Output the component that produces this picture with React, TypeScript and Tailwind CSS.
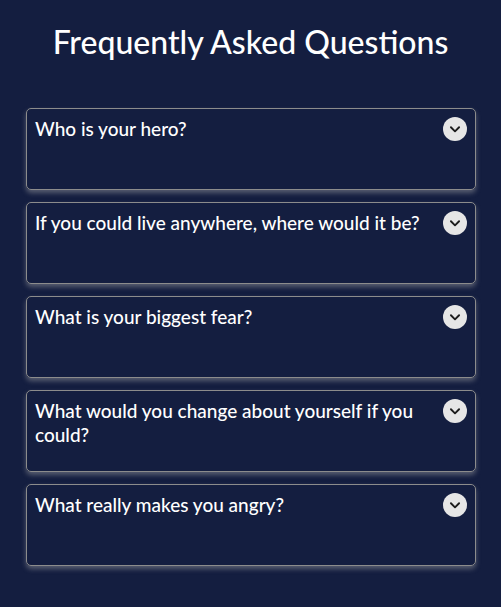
import { useState } from "react"

const QUESTIONS = [
	{ q: "Who is your hero?", a: "My parents, for everything they gave up." },
	{ q: "If you could live anywhere, where would it be?", a: "Somewhere near the sea." },
	{ q: "What is your biggest fear?", a: "Standing still." },
	{ q: "What would you change about yourself if you could?", a: "More patience." },
	{ q: "What really makes you angry?", a: "Unkindness." },
]

const Chevron = ({ open }: { open: boolean }) => (
	<span className="w-6 h-6 shrink-0 rounded-full bg-[#e6e6e6] flex items-center justify-center">
		<svg width="14" height="14" viewBox="0 0 24 24" className={open ? "rotate-180" : ""}>
			<path d="M5 9l7 7 7-7" fill="none" stroke="#1c1c1c" strokeWidth="3.2" strokeLinecap="round" strokeLinejoin="round" />
		</svg>
	</span>
)

const Item = ({ q, a }: { q: string; a: string }) => {
	const [open, setOpen] = useState(false)
	return (
		<div className="h-[82px] border border-[#8c8c8c] rounded-[5px] p-2 shadow-[0_3px_5px_rgba(170,170,170,0.45)]">
			<button onClick={() => setOpen(!open)} className="w-full flex items-start justify-between gap-3 text-left cursor-pointer">
				<span className="text-[19px] leading-6 font-medium text-white">{q}</span>
				<Chevron open={open} />
			</button>
			{open ? <p className="text-sm text-gray-300 mt-1">{a}</p> : null}
		</div>
	)
}

export default function App() {
	return (
		<div className="min-h-[607px] bg-[#141e40] font-['Lato',sans-serif] px-[26px] pt-[24px] pb-10">
			<h1 className="text-white text-[32px] leading-9 font-medium text-center mb-[48px]">Frequently Asked Questions</h1>
			<div className="w-[450px] flex flex-col gap-3">
				{QUESTIONS.map((item) => (
					<Item key={item.q} q={item.q} a={item.a} />
				))}
			</div>
		</div>
	)
}
